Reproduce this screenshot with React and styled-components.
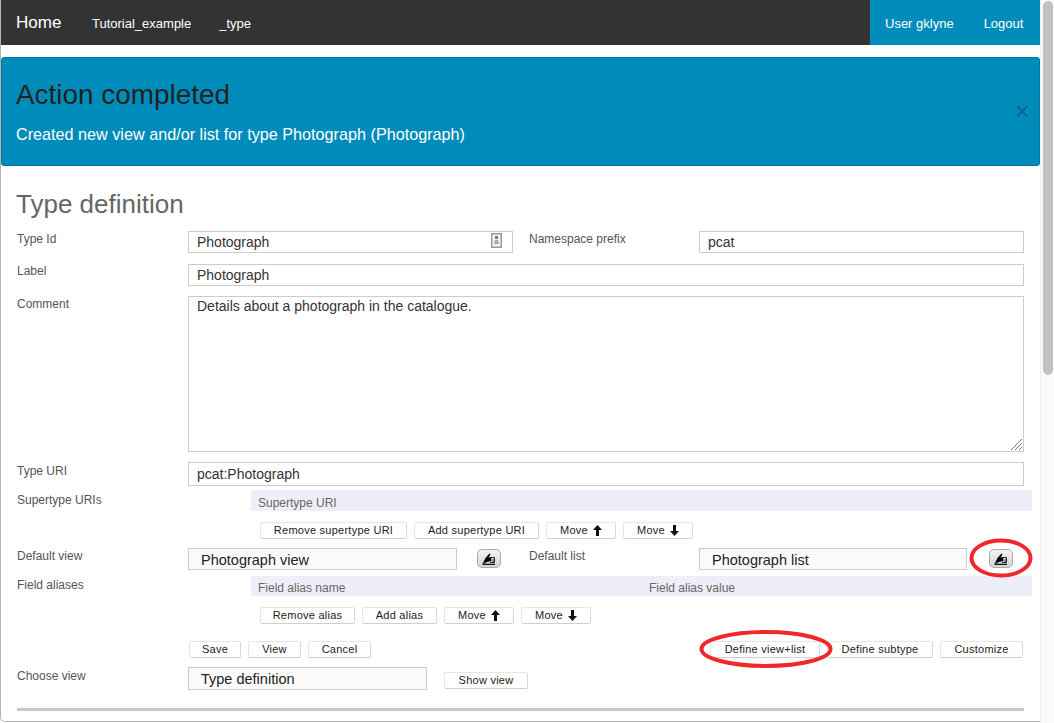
import React from 'react';
import styled, { createGlobalStyle } from 'styled-components';

const Global = createGlobalStyle`
  html, body { margin: 0; padding: 0; height: 723px; overflow: hidden; background: #fff; }
  body { font-family: "Liberation Sans", Arial, sans-serif; }
  * { box-sizing: border-box; }
`;

const Frame = styled.div`
  position: relative;
  width: 1054px;
  height: 723px;
  display: flex;
  overflow: hidden;
`;
const Page = styled.div`
  width: 1040px;
  height: 722px;
  border-left: 1px solid #b5b5b5;
  border-bottom: 1px solid #b5b5b5;
  border-bottom-left-radius: 5px;
  background: #fff;
`;
const Track = styled.div`
  width: 14px;
  height: 723px;
  padding: 1px 1px 0 2px;
  background: #fafafa;
  border-left: 1px solid #eee;
`;
const Thumb = styled.div`
  width: 10px;
  height: 374px;
  border-radius: 5px;
  background: #c1c1c1;
`;
const Nav = styled.nav`
  height: 45px;
  background: #333;
  display: flex;
  align-items: stretch;
  padding-left: 15px;
  color: #fff;
`;
const Brand = styled.a`
  font-size: 17px;
  line-height: 45px;
  width: 76px;
`;
const NavLink = styled.a`
  font-size: 13px;
  line-height: 47px;
  margin-right: ${p => p.$gap}px;
`;
const NavRight = styled.div`
  margin-left: auto;
  width: 170px;
  background: #008cba;
  display: flex;
  padding-left: 15px;
  gap: 30px;
`;
const Alert = styled.div`
  position: relative;
  height: 109px;
  margin-top: 12px;
  padding: 21px 14px 0;
  background: #008cba;
  border: 1px solid #0078a0;
  border-radius: 3px;
`;
const AlertTitle = styled.h2`
  margin: 0;
  font-size: 27.9px;
  line-height: 32px;
  font-weight: 400;
  color: #222;
`;
const AlertText = styled.p`
  margin: 13px 0 0;
  font-size: 16.2px;
  line-height: 20px;
  color: #fff;
`;
const Close = styled.span`
  position: absolute;
  right: 9px;
  top: 40px;
  font-size: 26px;
  line-height: 26px;
  color: #0a6a8c;
`;
const Content = styled.div`
  padding: 0 15px;
`;
const Title = styled.h1`
  margin: 20px 0 0;
  font-size: 26px;
  line-height: 36px;
  font-weight: 400;
  color: #666;
`;
const Row = styled.div`
  display: grid;
  grid-template-columns: 172px 325px 186px 325px;
  margin-top: ${p => p.$mt}px;
  height: ${p => p.$h}px;
`;
const Label = styled.label`
  font-size: 12px;
  line-height: 16px;
  color: #555;
  margin-top: ${p => p.$mt ?? 0}px;
  padding-top: ${p => p.$pt ?? 0}px;
  padding-left: 1px;
`;
const SideLabel = styled(Label)`
  padding-left: 16px;
`;
const Input = styled.div`
  position: relative;
  grid-column: ${p => p.$span || 'auto'};
  height: 100%;
  border: 1px solid #ccc;
  background: #fff;
  font-size: 14px;
  line-height: ${p => p.$lh || 20}px;
  padding-left: 8px;
  color: #333;
`;
const Area = styled(Input)`
  line-height: 18px;
  overflow: hidden;
`;
const Grip = styled.svg`
  position: absolute;
  right: 0;
  bottom: 0;
`;
const PinIcon = styled.svg`
  position: absolute;
  right: 10px;
  top: 1px;
`;
const Select = styled.div`
  width: ${p => p.$w}px;
  height: ${p => p.$h}px;
  border: 1px solid #ccc;
  background: #fafafa;
  font-size: 14.5px;
  line-height: 23px;
  padding-left: 12px;
  color: #222;
`;
const Inline = styled.div`
  display: flex;
  align-items: flex-start;
`;
const RepeatRow = styled.div`
  display: flex;
  margin-top: ${p => p.$mt}px;
`;
const RepeatLabel = styled(Label)`
  width: 235px;
  flex: none;
`;
const Repeat = styled.div`
  width: 781px;
  flex: none;
`;
const Band = styled.div`
  height: ${p => p.$h}px;
  background: #eeeef8;
  display: flex;
  padding-left: 7px;
  font-size: 12px;
  line-height: ${p => p.$lh}px;
  color: #666;
`;
const BandCell = styled.span`
  width: 391px;
  flex: none;
`;
const Buttons = styled.div`
  display: flex;
  gap: 7px;
  margin-top: 11px;
  padding-left: 9px;
  height: 18px;
`;
const Btn = styled.button`
  width: ${p => p.$w}px;
  height: 17px;
  padding: 0;
  font-family: "Liberation Sans", Arial, sans-serif;
  font-size: 11px;
  line-height: 15px;
  color: #222;
  letter-spacing: 0.25px;
  background: #fff;
  border: 1px solid #e6e6e6;
  border-bottom-color: #d0d0d0;
  border-right-color: #d8d8d8;
  border-radius: 2px;
  display: inline-flex;
  align-items: center;
  justify-content: center;
  gap: 5px;
`;
const EditBtn = styled.button`
  width: 24px;
  height: 19px;
  margin: 1px 0 0 ${p => p.$ml}px;
  padding: 0;
  flex: none;
  border: 1px solid #aaa;
  border-radius: 5px;
  background: linear-gradient(#f4f4f4, #d4d4d4);
  display: flex;
  align-items: center;
  justify-content: center;
`;
const ActionBar = styled.div`
  display: flex;
  justify-content: space-between;
  margin-top: 16px;
  padding: 0 2px 0 173px;
  height: 17px;
`;
const BtnGroup = styled.div`
  display: flex;
  gap: ${p => p.$gap}px;
`;
const ChooseRow = styled.div`
  display: flex;
  margin-top: 9px;
  height: 23px;
`;
const ChooseLabel = styled(Label)`
  width: 172px;
  flex: none;
`;
const ShowWrap = styled.div`
  margin: 3px 0 0 17px;
`;
const Rule = styled.hr`
  height: 3px;
  margin: 18px 1px 0;
  border: 0;
  background: #c8c8c8;
`;
const Marks = styled.svg`
  position: absolute;
  left: 0;
  top: 0;
  pointer-events: none;
`;

const WritingHand = () => (
  <svg width="14" height="12" viewBox="0 0 14 12">
    <path d="M0.5 11 L3.5 5 L7.5 0.5 L8.5 1.5 L6.5 4.5 L9 4 L9.5 8 L5 9 L2 10.5 Z" fill="#000" />
    <path d="M8 4.5 H12.5 V9.5 H8" fill="none" stroke="#222" strokeWidth="1" />
    <rect x="10.5" y="6" width="1.5" height="3" fill="#5570c0" />
    <path d="M0.5 11.3 H13" stroke="#000" strokeWidth="1.2" />
  </svg>
);
const ArrowUp = () => (
  <svg width="9" height="11" viewBox="0 0 9 11"><path d="M4.5 0 L9 5 H6 V11 H3 V5 H0 Z" fill="#111" /></svg>
);
const ArrowDown = () => (
  <svg width="9" height="11" viewBox="0 0 9 11"><path d="M4.5 11 L9 6 H6 V0 H3 V6 H0 Z" fill="#111" /></svg>
);

export default function App() {
  return (
    <Frame>
      <Global />
      <Page>
        <Nav>
          <Brand>Home</Brand>
          <NavLink $gap={28}>Tutorial_example</NavLink>
          <NavLink $gap={0}>_type</NavLink>
          <NavRight>
            <NavLink $gap={0}>User gklyne</NavLink>
            <NavLink $gap={0}>Logout</NavLink>
          </NavRight>
        </Nav>
        <Alert>
          <AlertTitle>Action completed</AlertTitle>
          <AlertText>Created new view and/or list for type Photograph (Photograph)</AlertText>
          <Close>×</Close>
        </Alert>
        <Content>
          <Title>Type definition</Title>
          <Row $mt={9} $h={22}>
            <Label>Type Id</Label>
            <Input>
              Photograph
              <PinIcon width="11" height="15" viewBox="0 0 11 15">
                <rect x="0.75" y="0.75" width="9.5" height="13.5" fill="#f2f2f2" stroke="#999" strokeWidth="1.5" />
                <rect x="4" y="3" width="3" height="3" fill="#777" />
                <path d="M3 11 L4 7 H7 L8 11 Z" fill="#aaa" />
              </PinIcon>
            </Input>
            <SideLabel>Namespace prefix</SideLabel>
            <Input>pcat</Input>
          </Row>
          <Row $mt={11} $h={22}>
            <Label $mt={-1}>Label</Label>
            <Input $span="2 / 5">Photograph</Input>
          </Row>
          <Row $mt={10} $h={156}>
            <Label>Comment</Label>
            <Area $span="2 / 5">
              Details about a photograph in the catalogue.
              <Grip width="14" height="14" viewBox="0 0 14 14">
                <path d="M13 2 L2 13 M13 6 L6 13 M13 10 L10 13" stroke="#777" strokeWidth="1" />
              </Grip>
            </Area>
          </Row>
          <Row $mt={10} $h={23}>
            <Label $pt={1}>Type URI</Label>
            <Input $span="2 / 5" $lh={22}>pcat:Photograph</Input>
          </Row>
          <RepeatRow $mt={5}>
            <RepeatLabel $pt={2}>Supertype URIs</RepeatLabel>
            <Repeat>
              <Band $h={21} $lh={27}><BandCell>Supertype URI</BandCell></Band>
              <Buttons>
                <Btn $w={147}>Remove supertype URI</Btn>
                <Btn $w={125}>Add supertype URI</Btn>
                <Btn $w={70}>Move <ArrowUp /></Btn>
                <Btn $w={70}>Move <ArrowDown /></Btn>
              </Buttons>
            </Repeat>
          </RepeatRow>
          <Row $mt={8} $h={22}>
            <Label>Default view</Label>
            <Inline>
              <Select $w={269} $h={22}>Photograph view</Select>
              <EditBtn $ml={20}><WritingHand /></EditBtn>
            </Inline>
            <SideLabel>Default list</SideLabel>
            <Inline>
              <Select $w={268} $h={22}>Photograph list</Select>
              <EditBtn $ml={22}><WritingHand /></EditBtn>
            </Inline>
          </Row>
          <RepeatRow $mt={6}>
            <RepeatLabel $pt={1}>Field aliases</RepeatLabel>
            <Repeat>
              <Band $h={20} $lh={25}>
                <BandCell>Field alias name</BandCell>
                <BandCell>Field alias value</BandCell>
              </Band>
              <Buttons>
                <Btn $w={95}>Remove alias</Btn>
                <Btn $w={75}>Add alias</Btn>
                <Btn $w={70}>Move <ArrowUp /></Btn>
                <Btn $w={70}>Move <ArrowDown /></Btn>
              </Buttons>
            </Repeat>
          </RepeatRow>
          <ActionBar>
            <BtnGroup $gap={7}>
              <Btn $w={52}>Save</Btn>
              <Btn $w={53}>View</Btn>
              <Btn $w={63}>Cancel</Btn>
            </BtnGroup>
            <BtnGroup $gap={7}>
              <Btn $w={110}>Define view+list</Btn>
              <Btn $w={106}>Define subtype</Btn>
              <Btn $w={83}>Customize</Btn>
            </BtnGroup>
          </ActionBar>
          <ChooseRow>
            <ChooseLabel $pt={1}>Choose view</ChooseLabel>
            <Select $w={239} $h={23}>Type definition</Select>
            <ShowWrap><Btn $w={84}>Show view</Btn></ShowWrap>
          </ChooseRow>
          <Rule />
        </Content>
      </Page>
      <Track><Thumb /></Track>
      <Marks width="1054" height="723" viewBox="0 0 1054 723">
        <ellipse cx="1001" cy="558" rx="29.5" ry="17.5" fill="none" stroke="#f0282a" strokeWidth="4" />
        <ellipse cx="766" cy="649" rx="64.5" ry="17" fill="none" stroke="#f0282a" strokeWidth="4" />
      </Marks>
    </Frame>
  );
}
